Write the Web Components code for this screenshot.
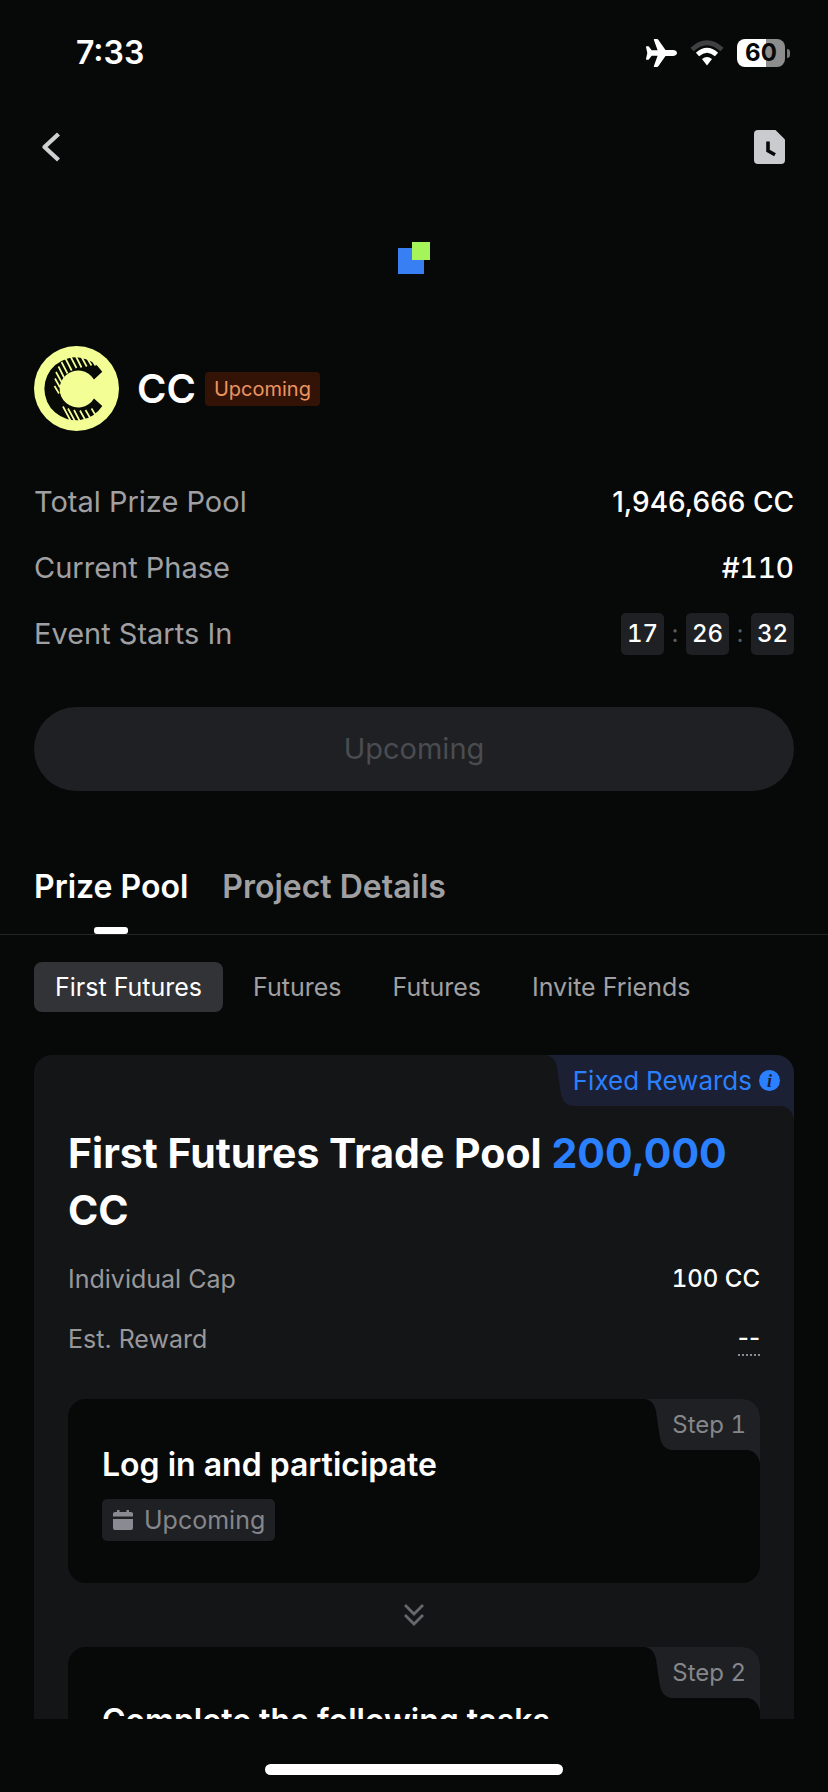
<!DOCTYPE html>
<html lang="en">
<head>
<meta charset="utf-8">
<meta name="viewport" content="width=device-width, initial-scale=1">
<title>CC Prize Pool</title>
<style>
  :root {
    --bg: #070808;
    --surface: #141517;
    --raised: #1e2023;
    --line: #232426;
    --text: #ffffff;
    --muted: #a0a0a2;
    --dim: #85868b;
    --blue: #2b80ff;
  }
  html, body { height: 100%; }
  body {
    margin: 0;
    background: var(--bg);
    color: var(--text);
    font-family: Inter, "Liberation Sans", sans-serif;
  }
</style>
</head>
<body>
<prize-app></prize-app>

<script>
const define = (name, html) => {
  const template = document.createElement('template');
  template.innerHTML = html;
  customElements.define(name, class extends HTMLElement {
    constructor() {
      super();
      this.attachShadow({ mode: 'open' }).append(template.content.cloneNode(true));
    }
  });
};

define('status-bar', `
  <style>
    :host { display: flex; align-items: center; justify-content: space-between; height: 106px; padding: 0 38px 0 76px; }
    time { font-size: 32px; line-height: 40px; font-weight: 600; }
    .icons { display: flex; align-items: center; gap: 13px; }
    svg { display: block; }
    .power { display: flex; align-items: center; gap: 2px; }
    .battery { width: 48px; height: 28px; border-radius: 8px; background: linear-gradient(90deg, #fff 60%, #8d8d8d 60%);
      color: #070808; font-size: 24px; line-height: 28px; font-weight: 700; text-align: center; }
    .nub { width: 3px; height: 9px; border-radius: 0 3px 3px 0; background: #77787a; }
  </style>
  <time>7:33</time>
  <div class="icons">
    <svg width="32" height="28" viewBox="0 0 32 28" fill="#fff" aria-label="Airplane mode">
      <path d="M32 14c0 1.700-2 2.900-4 2.900h-7.500L13.300 27.200c-.3.500-.8.800-1.300.8H9.500c-.5 0-.8-.5-.6-1l3.700-10.200H6.700L4 20.200c-.3.400-.6.500-1 .5H1.600c-.5 0-.7-.4-.6-.8L2.300 14 1 8.100c-.1-.4.100-.8.600-.8H3c.4 0 .7.100 1 .5l2.700 3.400h5.900L8.900 1c-.2-.5.100-1 .6-1H12c.5 0 1 .3 1.300.8l7.200 10.300H28c2 0 4 1.200 4 2.900z"/>
    </svg>
    <svg width="34" height="26" viewBox="0 0 34 26" fill="none" stroke-width="4.800" aria-label="Wi-Fi">
      <path d="M2 9.500Q17-4 32 9.500" stroke="#3f4041"/>
      <path d="M7.500 14.500Q17 6 26.500 14.500" stroke="#fff"/>
      <path d="M12 19Q17 14.800 22 19L17 25.500z" fill="#fff"/>
    </svg>
    <div class="power"><div class="battery">60</div><div class="nub"></div></div>
  </div>
`);

define('nav-bar', `
  <style>
    :host { display: flex; align-items: center; justify-content: space-between; height: 82px; padding: 0 43px 0 40px; }
    button { display: block; padding: 0; border: 0; background: none; }
    svg { display: block; }
  </style>
  <button aria-label="Back">
    <svg width="22" height="30" viewBox="0 0 22 30" fill="none" stroke="#cfd0d1" stroke-width="4.400" stroke-linecap="butt" stroke-linejoin="round">
      <path d="M18.500 2 4.500 15 18.500 28"/>
    </svg>
  </button>
  <button aria-label="History">
    <svg width="31" height="34" viewBox="0 0 31 34">
      <path d="M4 0h17.500L31 9.500V30a4 4 0 0 1-4 4H4a4 4 0 0 1-4-4V4a4 4 0 0 1 4-4z" fill="#c9cbce"/>
      <path d="M14 11.500v9.300l7 4" fill="none" stroke="#070808" stroke-width="3.600"/>
    </svg>
  </button>
`);

define('brand-mark', `
  <style>
    :host { display: flex; justify-content: center; }
    svg { display: block; }
  </style>
  <svg width="32" height="32" viewBox="0 0 32 32">
    <path d="M0 6h26v26H0z" fill="#377ff2"/>
    <path d="M14 0h18v18H14z" fill="#a5f55a"/>
  </svg>
`);

define('token-coin', `
  <style>
    :host { display: block; }
    svg { display: block; }
  </style>
  <svg width="85" height="85" viewBox="0 0 85 85" aria-label="CC">
    <circle cx="42.500" cy="42.500" r="42.500" fill="#f3ff95"/>
    <path d="M68.300 25.700 60 33.500A18.500 18.500 0 1 0 60 52.500L68.300 60A31.500 31.500 0 1 1 68.300 25.700z" fill="#080a05"/>
    <g stroke="#f3ff95" stroke-width="1.700" fill="none">
      <path d="M56.500 11l5 8.500M51.500 9.500l6 10M46.500 9l6.200 11.500M41.500 9.500l6 12M36.500 10.500l6 11.500M31.500 12.500l6.200 12M27.500 16l6 11.500M24.500 20.500l5.500 11M22 26l5.500 10M21 32.500l5 9M20.500 40l4.500 7.500"/>
      <path d="M57.500 62.500l6 10M51.500 64l7 12M46 64.500l8 14.500M40 64l7 13.500M34 62.500l8 14.500M29 60.500l7.500 14"/>
    </g>
  </svg>
`);

define('info-row', `
  <style>
    :host { display: flex; align-items: center; justify-content: space-between; min-height: 42px; font-size: 29px; line-height: 36px; }
    :host([compact]) { min-height: 36px; font-size: 25px; }
    .label { color: var(--muted); }
    :host([compact]) .label { color: #98989b; }
    .value { font-size: 28px; font-weight: 500; }
    :host([tabular]) .value { font-variant-numeric: tabular-nums; }
    :host([compact]) .value { font-size: 24px; }
  </style>
  <span class="label"><slot name="label"></slot></span>
  <span class="value"><slot></slot></span>
`);

define('count-down', `
  <style>
    :host { display: flex; align-items: center; font-size: 24px; line-height: 42px; font-variant-numeric: tabular-nums; }
    b { min-width: 43px; border-radius: 5px; background: var(--raised); font-weight: 500; text-align: center; }
    i { width: 22px; color: #5c5d60; font-style: normal; font-weight: 400; text-align: center; }
  </style>
  <b>17</b><i>:</i><b>26</b><i>:</i><b>32</b>
`);

define('main-tabs', `
  <style>
    :host { display: flex; gap: 34px; padding: 0 34px; border-bottom: 1px solid var(--line); }
    button { display: flex; flex-direction: column; align-items: center; gap: 20px; padding: 0; border: 0; background: none;
      color: var(--muted); font: 600 32px/40px Inter, "Liberation Sans", sans-serif; }
    button::after { content: ""; width: 34px; height: 7px; border-radius: 3px; }
    [aria-selected=true] { color: var(--text); }
    [aria-selected=true]::after { background: #fff; }
  </style>
  <button role="tab" aria-selected="true">Prize Pool</button>
  <button role="tab" aria-selected="false">Project Details</button>
`);

define('pool-filters', `
  <style>
    :host { display: flex; gap: 9px; padding: 0 34px; }
    button { padding: 0 21px; border: 0; border-radius: 8px; background: none; color: var(--muted);
      font: 400 25px/50px Inter, "Liberation Sans", sans-serif; white-space: nowrap; }
    [aria-pressed=true] { background: #323337; color: var(--text); }
  </style>
  <button aria-pressed="true">First Futures</button>
  <button aria-pressed="false">Futures</button>
  <button aria-pressed="false">Futures</button>
  <button aria-pressed="false">Invite Friends</button>
`);

/* Label hung from a card's top right corner, with a sloped left edge. */
define('corner-tab', `
  <style>
    :host { --fill: #1e2023; position: absolute; top: 0; right: 0; display: flex; color: var(--dim); font-size: 24px; line-height: 51px;
      font-variant-numeric: tabular-nums; }
    :host([tone=blue]) { --fill: #1b2034; color: var(--blue); font-size: 26px; }
    .body { display: flex; align-items: center; gap: 7px; padding-right: 14px; border-radius: 0 18px 0 0; background: var(--fill); }
    svg { display: block; fill: var(--fill); }
    .tail { position: absolute; top: 51px; right: 0; }
  </style>
  <svg width="27" height="51" viewBox="0 0 27 51"><path d="M0 0C6 1 9 4 11 12L14 33C16 46 19 50 27 51V0z"/></svg>
  <div class="body"><slot></slot></div>
  <svg class="tail" width="14" height="14" viewBox="0 0 14 14"><path d="M0 0h14v14C13 6 8 0 0 0z"/></svg>
`);

define('info-button', `
  <style>
    :host { display: block; }
    button { display: block; width: 21px; height: 21px; padding: 0; border: 0; border-radius: 50%; background: var(--blue);
      color: #1b2034; font: italic 700 18px/20px "Liberation Serif", serif; text-align: center; }
  </style>
  <button aria-label="About fixed rewards">i</button>
`);

define('step-card', `
  <style>
    :host { position: relative; display: flex; flex-direction: column; align-items: flex-start; gap: 14px;
      padding: 46px 34px 42px; border-radius: 18px; background: var(--bg); }
    :host([tasks]) { padding-top: 54px; }
    h3 { margin: 0; font-size: 32px; line-height: 40px; font-weight: 600; }
  </style>
  <corner-tab><slot name="step"></slot></corner-tab>
  <h3><slot name="title"></slot></h3>
  <slot></slot>
`);

define('date-tag', `
  <style>
    :host { display: flex; align-items: center; gap: 11px; padding: 0 10px 0 11px; border-radius: 5px; background: var(--raised);
      color: var(--dim); font-size: 25px; line-height: 42px; }
    svg { display: block; }
  </style>
  <svg width="20" height="20" viewBox="0 0 20 20" fill="#8a8b92">
    <path d="M0 6.500V4q0-2 2-2h2V0h2.500v2h7V0H16v2h2q2 0 2 2v2.500zM0 9h20v9q0 2-2 2H2q-2 0-2-2z"/>
  </svg>
  <slot></slot>
`);

define('step-arrow', `
  <style>
    :host { display: flex; align-items: center; justify-content: center; height: 64px; }
    svg { display: block; }
  </style>
  <svg width="20" height="22" viewBox="0 0 20 22" fill="none" stroke="#67686b" stroke-width="2.800">
    <path d="M1 1l9 9 9-9M1 11l9 9 9-9"/>
  </svg>
`);

define('pool-card', `
  <style>
    :host { position: relative; display: block; padding: 70px 34px 34px; border-radius: 18px; background: var(--surface); }
    h2 { margin: 0 0 22px; font-size: 41px; line-height: 57px; font-weight: 700; }
    em { color: var(--blue); font-style: normal; }
    .facts { display: flex; flex-direction: column; gap: 24px; margin-bottom: 42px; }
    .hint { display: block; border-bottom: 2px dotted #8a8b8e; line-height: 32px; }
  </style>
  <corner-tab tone="blue">Fixed Rewards<info-button></info-button></corner-tab>
  <h2>First Futures Trade Pool <em>200,000</em> CC</h2>
  <div class="facts">
    <info-row compact tabular><span slot="label">Individual Cap</span>100 CC</info-row>
    <info-row compact><span slot="label">Est. Reward</span><span class="hint">--</span></info-row>
  </div>
  <step-card>
    <span slot="step">Step 1</span>
    <span slot="title">Log in and participate</span>
    <date-tag>Upcoming</date-tag>
  </step-card>
  <step-arrow></step-arrow>
  <step-card tasks>
    <span slot="step">Step 2</span>
    <span slot="title">Complete the following tasks</span>
  </step-card>
`);

define('project-header', `
  <style>
    :host { display: flex; align-items: center; }
    h1 { margin: 0 9px 0 18px; font-size: 40px; line-height: 48px; font-weight: 600; }
    .tag { padding: 0 9px; border-radius: 4px; background: #341307; color: #ec9560; font-size: 20px; line-height: 34px; }
  </style>
  <token-coin></token-coin>
  <h1>CC</h1>
  <span class="tag">Upcoming</span>
`);

define('prize-app', `
  <style>
    :host { display: flex; flex-direction: column; height: 100vh; overflow: hidden; }
    main { flex: 1; min-height: 0; overflow-y: auto; scrollbar-width: none; }
    .hero { padding: 54px 34px 0; }
    project-header { margin-top: 72px; }
    .facts { display: flex; flex-direction: column; gap: 24px; margin: 50px 0 52px; }
    .join { display: block; width: 100%; height: 84px; border: 0; border-radius: 42px; background: var(--raised);
      color: #4b4c51; font: 400 29px/36px Inter, "Liberation Sans", sans-serif; }
    main-tabs { margin-top: 76px; }
    pool-filters { margin-top: 27px; }
    pool-card { margin: 43px 34px 34px; }
    footer { display: flex; flex: none; justify-content: center; align-items: flex-start; height: 28px; padding-top: 45px; }
    footer div { width: 36%; height: 11px; border-radius: 6px; background: #fff; }
  </style>
  <status-bar></status-bar>
  <nav-bar></nav-bar>
  <main>
    <section class="hero">
      <brand-mark></brand-mark>
      <project-header></project-header>
      <div class="facts">
        <info-row><span slot="label">Total Prize Pool</span>1,946,666 CC</info-row>
        <info-row tabular><span slot="label">Current Phase</span>#110</info-row>
        <info-row><span slot="label">Event Starts In</span><count-down></count-down></info-row>
      </div>
      <button class="join" disabled>Upcoming</button>
    </section>
    <main-tabs role="tablist"></main-tabs>
    <pool-filters></pool-filters>
    <pool-card></pool-card>
  </main>
  <footer><div></div></footer>
`);
</script>
</body>
</html>
